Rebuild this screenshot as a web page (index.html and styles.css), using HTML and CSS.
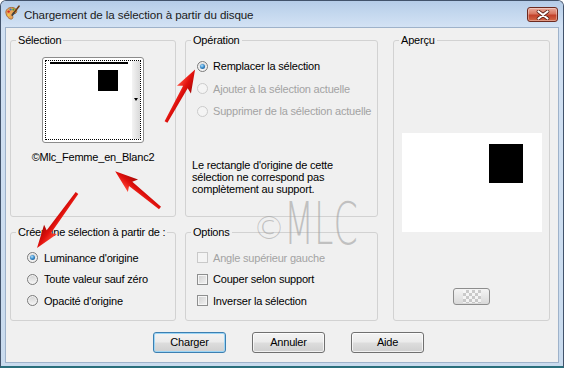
FILE: index.html
```html
<!DOCTYPE html>
<html lang="fr">
<head>
<meta charset="utf-8">
<title>Chargement de la sélection à partir du disque</title>
<link rel="stylesheet" href="styles.css">
</head>
<body>
<div class="window">
  <div class="titlebar">
    <svg class="app-icon" width="16" height="16" viewBox="0 0 16 16">
      <path d="M2 8.5 C1 4.5 5 1.8 9 2.6 C12.5 3.3 13.6 6.2 12 8 C11 9.1 9.4 8.4 8.7 9.5 C8 10.7 9.6 12.2 8.4 13.6 C6.6 15.3 2.9 12.6 2 8.5 Z" fill="#e9a55b" stroke="#9a5a22" stroke-width="0.8"/>
      <circle cx="4.6" cy="6.6" r="1.2" fill="#d42a1e"/>
      <circle cx="6.6" cy="4.5" r="1.1" fill="#2f6fd0"/>
      <circle cx="9.4" cy="4.6" r="1.1" fill="#3aa13a"/>
      <circle cx="4.6" cy="10" r="1.1" fill="#f3d23a"/>
      <path d="M15 1.2 L9.6 8.2" stroke="#6b3b14" stroke-width="1.6" stroke-linecap="round"/>
      <path d="M9.9 7.8 L8.3 10" stroke="#444" stroke-width="2" stroke-linecap="round"/>
    </svg>
    <span class="title">Chargement de la sélection à partir du disque</span>
    <div class="close-btn">
      <svg width="14" height="10" viewBox="0 0 14 10">
        <path d="M2.5 1.5 L11.5 8.5 M11.5 1.5 L2.5 8.5" stroke="#5a1d14" stroke-width="3.6" stroke-linecap="round"/>
        <path d="M2.5 1.5 L11.5 8.5 M11.5 1.5 L2.5 8.5" stroke="#ffffff" stroke-width="2.2" stroke-linecap="round"/>
      </svg>
    </div>
  </div>

  <div class="client">
    <div class="groups">
      <fieldset class="group g-selection">
        <legend>Sélection</legend>
        <div class="thumb">
          <div class="thumb-inner">
            <div class="thumb-canvas">
              <div class="thumb-bar"></div>
              <div class="thumb-square"></div>
            </div>
            <div class="thumb-strip"><span class="thumb-arrow"></span></div>
          </div>
        </div>
        <div class="thumb-name">©Mlc_Femme_en_Blanc2</div>
      </fieldset>

      <fieldset class="group g-operation">
        <legend>Opération</legend>
        <div class="opt-list op-list">
          <div class="opt"><span class="radio checked"></span>Remplacer la sélection</div>
          <div class="opt disabled"><span class="radio"></span>Ajouter à la sélection actuelle</div>
          <div class="opt disabled"><span class="radio"></span>Supprimer de la sélection actuelle</div>
        </div>
        <p class="note">Le rectangle d'origine de cette<br>sélection ne correspond pas<br>complètement au support.</p>
      </fieldset>

      <fieldset class="group g-preview">
        <legend>Aperçu</legend>
        <div class="preview">
          <div class="preview-square"></div>
        </div>
        <div class="bg-btn"><span class="checker"></span></div>
      </fieldset>

      <fieldset class="group g-create">
        <legend>Créer une sélection à partir de :</legend>
        <div class="opt-list create-list">
          <div class="opt"><span class="radio checked"></span>Luminance d'origine</div>
          <div class="opt"><span class="radio"></span>Toute valeur sauf zéro</div>
          <div class="opt"><span class="radio"></span>Opacité d'origine</div>
        </div>
      </fieldset>

      <fieldset class="group g-options">
        <legend>Options</legend>
        <div class="opt-list options-list">
          <div class="opt disabled"><span class="check"></span>Angle supérieur gauche</div>
          <div class="opt"><span class="check"></span>Couper selon support</div>
          <div class="opt"><span class="check"></span>Inverser la sélection</div>
        </div>
      </fieldset>
    </div>

    <div class="buttons">
      <div class="btn default">Charger</div>
      <div class="btn">Annuler</div>
      <div class="btn">Aide</div>
    </div>
  </div>

  <div class="watermark"><span class="wm-c">©</span><span class="wm-mlc">MLC</span></div>

  <svg class="arrows" width="564" height="368" viewBox="0 0 564 368">
    <defs>
      <linearGradient id="redg" x1="0" y1="-8" x2="0" y2="8" gradientUnits="userSpaceOnUse">
        <stop offset="0" stop-color="#ff4a3a"/>
        <stop offset="0.5" stop-color="#e0100c"/>
        <stop offset="1" stop-color="#a80806"/>
      </linearGradient>
    </defs>
    <polygon transform="translate(166,122) rotate(-61)" points="0,-1.6 40,-2.6 37,-8 60,0 37,8 40,2.6 0,1.6" fill="url(#redg)"/>
    <polygon transform="translate(160,208) rotate(-140.6)" points="0,-1.6 38,-2.6 35,-8 58,0 35,8 38,2.6 0,1.6" fill="url(#redg)"/>
    <polygon transform="translate(77,193) rotate(126)" points="0,-1.6 48,-2.6 45,-8 68,0 45,8 48,2.6 0,1.6" fill="url(#redg)"/>
  </svg>
</div>
</body>
</html>
```

FILE: styles.css
```css
* { box-sizing: border-box; }

html, body {
  margin: 0;
  padding: 0;
  width: 564px;
  height: 368px;
  overflow: hidden;
  background: #ffffff;
}

body {
  font-family: "Liberation Sans", Arial, sans-serif;
  font-size: 11px;
  letter-spacing: -0.2px;
  color: #000;
}

.window {
  position: relative;
  width: 564px;
  height: 368px;
  border: 1px solid #42536b;
  border-bottom: 2px solid #2a6f7c;
  border-radius: 6px 6px 0 0;
  background: linear-gradient(#d2e1f3, #c9dbee);
  display: flex;
  flex-direction: column;
}

.titlebar {
  height: 26px;
  flex: none;
  display: flex;
  align-items: center;
  background: linear-gradient(#b5cce8 0%, #c3d7ee 45%, #d3e2f4 100%);
  border-radius: 5px 5px 0 0;
}

.app-icon {
  flex: none;
  margin-left: 3px;
  margin-top: -2px;
}

.title {
  margin-left: 4px;
  font-family: "Liberation Sans", Arial, sans-serif;
  font-size: 11.6px;
  letter-spacing: -0.1px;
  color: #1b1b1b;
}

.close-btn {
  margin-left: auto;
  margin-right: 5px;
  align-self: flex-start;
  margin-top: 6px;
  width: 31px;
  height: 15px;
  border: 1px solid #6c2a20;
  border-radius: 3px;
  background: linear-gradient(#e9ab9c 0%, #d9765f 45%, #c2412a 55%, #d36847 100%);
  box-shadow: inset 0 0 0 1px rgba(255,255,255,0.35);
  display: flex;
  align-items: center;
  justify-content: center;
}

.client {
  flex: 1;
  margin: 0 4px 3px 4px;
  border: 1px solid #9eb2ca;
  background: #f0f0f0;
  padding: 6px 2px 0 4px;
  display: flex;
  flex-direction: column;
}

.groups {
  display: grid;
  grid-template-columns: 166px 193px 163px;
  grid-template-rows: 183px 95px;
  column-gap: 9px;
  row-gap: 9px;
}

.group {
  margin: 0;
  padding: 0;
  min-width: 0;
  border: 1px solid #d2d2d2;
  border-radius: 3px;
}

.group legend {
  padding: 0 2px;
  margin-left: 5px;
  line-height: 13px;
  height: 13px;
}

.g-selection { grid-column: 1; grid-row: 1; display: flex; flex-direction: column; align-items: center; }
.g-operation { grid-column: 2; grid-row: 1; }
.g-preview { grid-column: 3; grid-row: 1 / span 2; margin-left: 6px; display: flex; flex-direction: column; align-items: center; }
.g-create { grid-column: 1; grid-row: 2; }
.g-options { grid-column: 2; grid-row: 2; }

/* Selection thumbnail */
.thumb {
  margin-top: 10px;
  width: 102px;
  height: 86px;
  border: 1px solid #8b8b8b;
  border-radius: 3px;
  background: #fff;
  padding: 2px;
}

.thumb-inner {
  width: 100%;
  height: 100%;
  border: 1px dotted #000;
  display: flex;
}

.thumb-canvas {
  flex: 1;
  display: flex;
  flex-direction: column;
  padding: 1px 0 0 4px;
}

.thumb-bar {
  height: 2px;
  width: 78px;
  background: #000;
}

.thumb-square {
  margin-top: 6px;
  margin-left: 48px;
  width: 20px;
  height: 21px;
  background: #000;
}

.thumb-strip {
  width: 8px;
  flex: none;
  background: linear-gradient(90deg, #f4f4f4, #d9d9d9);
  display: flex;
  justify-content: center;
  padding-top: 37px;
}

.thumb-arrow {
  width: 0;
  height: 0;
  border-left: 2.5px solid transparent;
  border-right: 2.5px solid transparent;
  border-top: 3px solid #000;
}

.thumb-name {
  margin-top: 8px;
  line-height: 13px;
}

/* Option lists */
.opt-list {
  margin-top: 8px;
  display: flex;
  flex-direction: column;
}

.opt {
  display: flex;
  align-items: center;
  height: 21.5px;
  white-space: nowrap;
}

.op-list { padding-left: 11px; }
.op-list .opt { height: 22.5px; }
.create-list { padding-left: 16px; }
.create-list .radio { margin-right: 6px; }
.options-list { padding-left: 11px; }

.opt.disabled { color: #a3a3a3; }

.radio {
  flex: none;
  width: 11px;
  height: 11px;
  margin-right: 5px;
  border-radius: 50%;
  border: 1px solid #7b7b7b;
  background: linear-gradient(#d2d2d2, #f7f7f7);
  box-shadow: inset 0 0 0 1px #f4f4f4;
  display: grid;
  place-items: center;
}

.radio.checked::after {
  content: "";
  width: 5px;
  height: 5px;
  border-radius: 50%;
  background: radial-gradient(circle at 40% 35%, #b7e3fb 0%, #3b8fd0 45%, #0d3f72 100%);
}

.opt.disabled .radio {
  border-color: #cbcbcb;
  background: #f4f4f4;
  box-shadow: none;
}

.check {
  flex: none;
  width: 11px;
  height: 11px;
  margin-right: 5px;
  border: 1px solid #8e8f8f;
  background: linear-gradient(135deg, #cfcfcf, #f4f4f4);
  box-shadow: inset 0 0 0 1px #f6f6f6;
}

.opt.disabled .check {
  border-color: #c9c9c9;
  background: #f4f4f4;
  box-shadow: none;
}

.note {
  margin: 36px 0 0 6px;
  line-height: 12px;
}

/* Preview */
.preview {
  margin-top: 86px;
  width: 140px;
  height: 99px;
  background: #fff;
  padding: 11px 0 0 87px;
}

.preview-square {
  width: 34px;
  height: 39px;
  background: #000;
}

.bg-btn {
  margin-top: 56px;
  width: 37px;
  height: 17px;
  border: 1px solid #8d8d8d;
  border-radius: 3px;
  background: linear-gradient(#f4f4f4, #d9d9d9);
  display: flex;
  align-items: center;
  justify-content: center;
}

.checker {
  width: 18px;
  height: 13px;
  background: conic-gradient(#c4c4c4 25%, #f7f7f7 0 50%, #c4c4c4 0 75%, #f7f7f7 0) 0 0 / 6px 6px;
  opacity: 0.85;
}

/* Buttons */
.buttons {
  margin-top: 11px;
  padding-left: 143px;
  display: flex;
  gap: 26px;
}

.btn {
  width: 73px;
  height: 21px;
  border: 1px solid #707070;
  border-radius: 3px;
  background: linear-gradient(#f3f3f3 0%, #ebebeb 48%, #dddddd 52%, #cfcfcf 100%);
  box-shadow: inset 0 0 0 1px rgba(255,255,255,0.7);
  display: flex;
  align-items: center;
  justify-content: center;
  line-height: 13px;
}

.btn.default {
  border-color: #3c7fb1;
  box-shadow: inset 0 0 0 1px #9cd5f5;
}

/* Watermark overlay */
.watermark {
  position: absolute;
  left: 252px;
  top: 194px;
  display: flex;
  align-items: flex-end;
  color: rgba(160, 160, 160, 0.6);
  font-family: "DejaVu Sans", sans-serif;
  font-weight: 200;
  pointer-events: none;
  letter-spacing: 0;
}

.wm-c {
  font-size: 32px;
  line-height: 38px;
  margin-bottom: 6px;
}

.wm-mlc {
  font-size: 58px;
  line-height: 58px;
  display: inline-block;
  transform: scaleX(0.6);
  transform-origin: left bottom;
  margin-left: -1px;
}

.arrows {
  position: absolute;
  left: -1px;
  top: -1px;
  pointer-events: none;
}
```
